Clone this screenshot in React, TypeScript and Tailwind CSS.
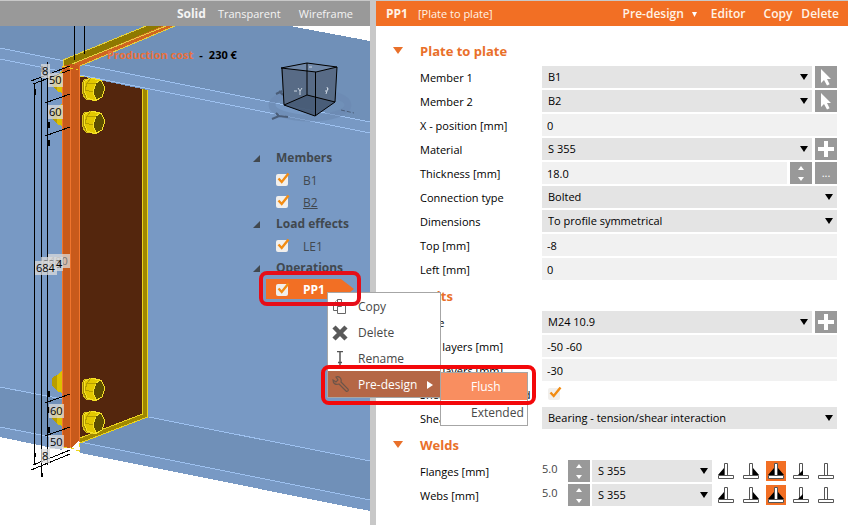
import { useState } from "react";
import type { ReactNode } from "react";
import clsx from "clsx";

const Caret = ({ className }: { className?: string }) => (
    <svg className={className} width="8" height="6" viewBox="0 0 8 6" fill="currentColor">
        <path d="M0 0h8L4 6z" />
    </svg>
);

function Check({ id, label, className }: { id: string; label?: string; className?: string }) {
    const [on, setOn] = useState(true);

    return (
        <span className={clsx("relative block size-3", className)}>
            <input
                id={id}
                type="checkbox"
                aria-label={label}
                checked={on}
                onChange={() => setOn(!on)}
                className="block size-3 appearance-none rounded-xs bg-[#f1efec]"
            />
            {on && (
                <svg className="pointer-events-none absolute -top-1 left-0" width="16" height="16" viewBox="0 0 16 16" fill="none">
                    <path d="M2.500 8.500l3.200 3.500L12.500 3.500" stroke="#f28c13" strokeWidth="2.400" />
                </svg>
            )}
        </span>
    );
}

function Select({ id, value, label, className }: { id?: string; value: string; label?: string; className?: string }) {
    return (
        <div className={clsx("relative h-[22px] min-w-0 bg-[#e4e4e4]", className)}>
            <select id={id} aria-label={label} className="block h-full w-full appearance-none bg-transparent pr-5 pb-px pl-1.5 outline-none">
                <option>{value}</option>
            </select>
            <Caret className="pointer-events-none absolute top-2 right-1 text-black" />
        </div>
    );
}

const Field = ({ id, value }: { id: string; value: string }) => (
    <input id={id} defaultValue={value} className="h-[22px] w-full min-w-0 flex-1 bg-[#f1f1f1] px-[5px] outline-none" />
);

function Square({ label, children }: { label: string; children: ReactNode }) {
    return (
        <button type="button" aria-label={label} className="flex size-[22px] shrink-0 items-center justify-center bg-[#999] text-white">
            {children}
        </button>
    );
}

const PickIcon = () => (
    <svg width="14" height="18" viewBox="0 0 14 18" fill="white">
        <path d="M2 1v14l3-3 3 5.500 2.600-1.300L8 11h4z" />
    </svg>
);

const PlusIcon = () => (
    <svg width="16" height="16" viewBox="0 0 16 16" fill="white">
        <path d="M6 0h4v6h6v4h-6v6H6v-6H0V6h6z" />
    </svg>
);

function Spinner({ label }: { label: string }) {
    return (
        <div className="flex size-[22px] shrink-0 flex-col bg-[#999] text-white">
            <button type="button" aria-label={`Increase ${label}`} className="flex flex-1 items-center justify-center">
                <svg width="6" height="4" viewBox="0 0 6 4" fill="currentColor"><path d="M0 4h6L3 0z" /></svg>
            </button>
            <button type="button" aria-label={`Decrease ${label}`} className="flex flex-1 items-center justify-center">
                <svg width="6" height="4" viewBox="0 0 6 4" fill="currentColor"><path d="M0 0h6L3 4z" /></svg>
            </button>
        </div>
    );
}

function Row({ id, label, children }: { id: string; label: string; children: ReactNode }) {
    return (
        <div className="flex h-[22px] items-center">
            <label htmlFor={id} className="w-[122px] shrink-0 whitespace-nowrap pt-px">{label}</label>
            <div className="flex min-w-0 flex-1 items-center gap-[3px]">{children}</div>
        </div>
    );
}

function Section({ title, children }: { title: string; children: ReactNode }) {
    return (
        <section>
            <h2 className="flex h-[31px] items-center text-[13px] font-bold text-[#e9702a]">
                <button type="button" aria-label={`Collapse ${title}`} className="w-[27px]">
                    <svg width="10" height="7" viewBox="0 0 10 7" fill="currentColor"><path d="M0 0h10L5 7z" /></svg>
                </button>
                {title}
            </h2>
            <div className="flex flex-col gap-0.5 pl-[27px]">{children}</div>
        </section>
    );
}

const weldTypes = [
    { name: "Left fillet", fill: "M2 14h6V7z" },
    { name: "Right fillet", fill: "M12 7v7h6z" },
    { name: "Both fillets", fill: "M2 14h6V7zM12 7v7h6z" },
    { name: "Butt weld", fill: "M7 14h5V9z" },
    { name: "No weld", fill: "" },
];

function WeldRow({ id, label }: { id: string; label: string }) {
    const [type, setType] = useState(2);

    return (
        <Row id={id} label={label}>
            <input id={id} defaultValue="5.0" className="w-[23px] pb-1 font-normal text-[#444] outline-none" />
            <Spinner label={label} />
            <Select label={`${label} material`} value="S 355" className="-ml-px flex-1" />
            <div className="flex gap-[5px] pr-px pl-px">
                {weldTypes.map((weld, i) => (
                    <button
                        key={weld.name}
                        type="button"
                        aria-label={weld.name}
                        onClick={() => setType(i)}
                        className={clsx("size-5", i === type && "bg-[#f26f24]")}
                    >
                        <svg width="20" height="20" viewBox="0 0 20 20">
                            <path d="M8.500 14.500v-12h3v12M2.500 14.500h15v3h-15z" fill="white" stroke="#555" />
                            <path d={weld.fill} fill="black" />
                        </svg>
                    </button>
                ))}
            </div>
        </Row>
    );
}

const Bolt = ({ x, y }: { x: number; y: number }) => (
    <g transform={`translate(${x} ${y})`}>
        <path d="M3 2C-1 6-1 18 4 22l6 1V2z" fill="#a48d00" stroke="#e0c81a" />
        <path d="M3 4l6-3 9 2 4 8-3 9-5 4-9-3-3-8z" fill="#e2c800" stroke="#f6e228" />
        <path d="M14 6l5-3 4 8-3 9-6 3-3-8z" fill="#5d4e00" stroke="#f6e228" />
        <path d="M9 1l-4 5 9 0M5 6L3 13l8 2" fill="none" stroke="#b59e00" />
    </g>
);

const BoltEnd = ({ y }: { y: number }) => (
    <g>
        <path d={`M62 ${y - 11}l-5 4-5 3v8l5 5 5 2z`} fill="#dcc000" />
        <path d={`M57 ${y - 7}l-5 3v8l5 5z`} fill="#b89d00" />
    </g>
);

const Dim = ({ x, y, w, children, faded }: { x: number; y: number; w: number; children: ReactNode; faded?: boolean }) => (
    <g>
        <rect x={x} y={y} width={w} height="14" fill="#dcdcdc" fillOpacity="0.75" />
        <text x={x + 1} y={y + 11} fontSize="11" fill={faded ? "#777" : "black"}>{children}</text>
    </g>
);

function Model() {
    return (
        <svg className="absolute inset-0 h-full w-full" viewBox="0 26 370 499" preserveAspectRatio="xMinYMin slice">
            <g shapeRendering="crispEdges">
                <path d="M0 26h290l80 15v470L80 453v-12H62v9L0 437z" fill="#7899c4" />
                <path d="M0 26h290l80 15v81L80 64 63 60 0 48z" fill="#7090b8" />
                <path d="M0 387l62 12v40L0 427zM149 417l221 44v39L80 442z" fill="#7090b8" />
                <g stroke="#9dc1f0" fill="none">
                    <path d="M0 48l370 74M0 59l370 74M0 387l62 12M0 427l62 12M149 417l221 44M80 442l290 58" />
                </g>

                {/* beam web with the end plate */}
                <path d="M142 89l6 1v327l-68 26v-5l62-24z" fill="#a08800" />
                <path d="M80 76l62 13v325l-62 24z" fill="#54260d" />
                <path d="M142.500 89v325L80 438M147.500 90v327L80 443" stroke="#ecd51e" fill="none" />
                <path d="M63 60l83-34h29L80 66H63z" fill="#8e7900" />
                <path d="M72 64l90-38h13L80 66z" fill="#cf6420" />
                <path d="M63 66v-6l83-34M72 64l94-38M80 66l95-40" stroke="#e4d140" fill="none" />
                <path d="M62 66l9-2 9 2v373l-8 9-10-1z" fill="#c85a1b" />
                <path d="M62.500 66v381M70.500 66v382M79.500 66v376" stroke="#f0752d" />
                <path d="M62 66l16 4M80 76l12 3M63 447l8 1 8 3v-9" stroke="#ecd51e" fill="none" strokeDasharray="4 3" />

                {[77, 110, 377, 410].map((y) => <Bolt key={y} x={82} y={y} />)}
                {[82, 115, 382, 415].map((y) => <BoltEnd key={y} y={y} />)}

                <g stroke="black" fill="none">
                    <path d="M34.500 83v382M41.500 76v400M47.500 62v403M74.500 26v34M84.500 26v28" />
                    <path d="M31 81l39-15M33 84l37-14M45 103l25-9M45 136l25-9M45 403l25-9M45 436l25-9M33 465l37-15M31 470l39-16" />
                    <path d="M34.500 89v6M41.500 66v6M48.500 122v6M48.500 140v6M48.500 391v6M48.500 407v6M48.500 427v6M41.500 473v4M34.500 453v4" strokeWidth="2" />
                </g>
            </g>
            <Dim x={48} y={254} w={22} faded>480</Dim>
            <Dim x={41} y={257} w={22} faded>680</Dim>
            <Dim x={35} y={261} w={22}>684</Dim>
            <text x="56" y="268" fontSize="11">4</text>
            <Dim x={41} y={64} w={9}>8</Dim>
            <Dim x={48} y={73} w={15}>50</Dim>
            <Dim x={48} y={105} w={15}>60</Dim>
            <Dim x={49} y={404} w={15}>60</Dim>
            <Dim x={49} y={435} w={15}>50</Dim>
            <Dim x={41} y={449} w={9}>8</Dim>

            {/* view cube */}
            <ellipse cx="310" cy="105" rx="38" ry="13" fill="none" stroke="#6b89b0" strokeWidth="7" opacity="0.6" />
            <path d="M272 119l7-3 9 1M279 116l-3-3M276 94l6-3M279 91l4 4" stroke="#4a5d78" strokeWidth="2" fill="none" />
            <path d="M341 110l13 3" stroke="#4a5d78" strokeDasharray="4 2" />
            <path d="M281 68l26-5 30 4-2 35-20 14-31-11z" fill="#54657d" fillOpacity="0.85" />
            <path d="M281 68l26-5 30 4-21 5z" fill="#7088a8" />
            <path d="M284 105l23-10 28 7-20 14z" fill="#40546f" fillOpacity="0.6" />
            <path d="M281 68l26-5 30 4-21 5zM282 68l2 37 31 11 20-14 2-35M315.500 72v44M307 63v32l-23 10M307 95l28 7" stroke="black" fill="none" />
            <path d="M294 91h3M298 88l2 3 2-3M300 91v4M325 91h2M327 87l1 3M328 88l-2 6M309 67h3" stroke="#cbd5e1" fill="none" />
        </svg>
    );
}

function TreeGroup({ title, children }: { title: string; children: ReactNode }) {
    return (
        <li>
            <button type="button" className="flex h-[22px] items-center text-[12px] font-bold">
                <svg className="mr-4 ml-[3px]" width="7" height="7" viewBox="0 0 7 7" fill="currentColor"><path d="M7 0v7H0z" /></svg>
                {title}
            </button>
            <ul>{children}</ul>
        </li>
    );
}

function TreeItem({ id, underline }: { id: string; underline?: boolean }) {
    return (
        <li className="flex h-[22px] items-center gap-[15px] pl-[26px]">
            <Check id={id} />
            <label htmlFor={id} className={clsx("pt-px text-[12px] font-medium", underline && "underline")}>{id}</label>
        </li>
    );
}

const menuIcons = {
    Copy: (
        <svg width="16" height="18" viewBox="0 0 16 18" fill="white" stroke="#666">
            <path d="M1.500 5.500l4-4h4v11h-8z" />
            <path d="M1.500 5.500h4v-4" />
            <path d="M5.500 8.500l4-4h4v11h-8z" />
            <path d="M5.500 8.500h4v-4" />
        </svg>
    ),
    Delete: (
        <svg width="16" height="16" viewBox="0 0 16 16" stroke="#595959" strokeWidth="4.500">
            <path d="M2 2l12 12M14 2L2 14" />
        </svg>
    ),
    Rename: (
        <svg width="16" height="16" viewBox="0 0 16 16" stroke="#555" fill="none">
            <path d="M5 .5h6M8 1v14M6 11.500h4M7 15h2" strokeWidth="1.500" />
        </svg>
    ),
    "Pre-design": (
        <svg width="17" height="17" viewBox="0 0 17 17" stroke="#6d5549" fill="none" strokeWidth="1.200">
            <path d="M1 4l3 2 2-2-2-3c3-1 6 1 5 5l7 7c1 2-1 3-2 2L7 8C4 9 1 8 1 4z" />
        </svg>
    ),
};

function ContextMenu() {
    return (
        <div className="absolute top-[13px] left-[61px] z-20 w-[114px] border border-[#a6a6a6] bg-white text-[12px] font-medium text-[#484848]">
            {Object.entries(menuIcons).map(([name, icon]) => (
                <button
                    key={name}
                    type="button"
                    className={clsx("flex h-[26px] w-full items-center pt-px pl-1", name === "Pre-design" && "bg-[#b56746] text-white")}
                >
                    <span className="w-[26px]">{icon}</span>
                    {name}
                    {name === "Pre-design" && (
                        <svg className="ml-2.5" width="6" height="8" viewBox="0 0 6 8" fill="white"><path d="M0 0v8l6-4z" /></svg>
                    )}
                </button>
            ))}
            <div className="absolute top-[79px] left-[112px] w-[88px] border border-[#a6a6a6] bg-white">
                <button type="button" className="block h-[27px] w-full bg-[#f98e60] pl-[30px] text-left text-white">Flush</button>
                <button type="button" className="block h-[25px] w-full pl-[30px] text-left">Extended</button>
            </div>
            <div className="pointer-events-none absolute top-[72px] -left-[7px] h-10 w-[215px] rounded-lg border-4 border-[#f3080a]" />
        </div>
    );
}

function Scene() {
    return (
        <div className="flex min-w-0 flex-col">
            <nav className="flex h-[25px] items-center justify-end bg-[#999] pt-px pr-[17px] text-[#f4f4f4]">
                <button type="button" className="mr-3 text-[12px] font-bold">Solid</button>
                <button type="button" className="mr-[18px]">Transparent</button>
                <button type="button">Wireframe</button>
            </nav>
            <div className="relative flex-1 bg-white">
                <Model />
                <p className="absolute top-[21px] left-[107px] flex gap-1.5 text-[11px] font-bold text-black">
                    <span className="text-[#e8703c]">Production cost</span>
                    <span>-</span>
                    <span>230 €</span>
                </p>
                <ul className="absolute top-[121px] right-[10px] w-[110px] text-[#41484f]">
                    <TreeGroup title="Members">
                        <TreeItem id="B1" />
                        <TreeItem id="B2" underline />
                    </TreeGroup>
                    <TreeGroup title="Load effects">
                        <TreeItem id="LE1" />
                    </TreeGroup>
                    <TreeGroup title="Operations">
                        <li className="relative ml-4 flex h-[22px] items-center gap-[15px] pl-2.5 text-white">
                            <svg className="absolute top-0 left-0" width="88" height="20" viewBox="0 0 88 20"><path d="M0 0h75l13 10-13 10H0z" fill="#f26f24" /></svg>
                            <Check id="PP1" />
                            <label htmlFor="PP1" className="relative text-[12px] font-bold">PP1</label>
                            <ContextMenu />
                            <div className="pointer-events-none absolute -top-2 -left-[7px] z-30 h-[35px] w-[102px] rounded-lg border-4 border-[#e60d18]" />
                        </li>
                    </TreeGroup>
                </ul>
            </div>
        </div>
    );
}

function Properties() {
    return (
        <div className="min-w-0 bg-white">
            <header className="flex h-[25px] items-center bg-[#f26f24] pt-px pr-[9px] pl-2.5 text-[12px] text-[#fff3e6]">
                <h1 className="mr-2.5 font-bold">PP1</h1>
                <span className="flex-1 text-[11px] whitespace-nowrap">[Plate to plate]</span>
                <nav className="flex font-semibold">
                    <button type="button" className="mr-3.5 flex items-center gap-2">
                        Pre-design
                        <svg width="5" height="5" viewBox="0 0 5 5" fill="white"><path d="M0 0h5L2.500 5z" /></svg>
                    </button>
                    <button type="button" className="mr-[18px]">Editor</button>
                    <button type="button" className="mr-[9px]">Copy</button>
                    <button type="button">Delete</button>
                </nav>
            </header>
            <form className="pt-[9px] pr-[11px] pl-[17px]">
                <Section title="Plate to plate">
                    <Row id="member1" label="Member 1">
                        <Select id="member1" value="B1" className="flex-1" />
                        <Square label="Pick member 1"><PickIcon /></Square>
                    </Row>
                    <Row id="member2" label="Member 2">
                        <Select id="member2" value="B2" className="flex-1" />
                        <Square label="Pick member 2"><PickIcon /></Square>
                    </Row>
                    <Row id="x" label="X - position [mm]"><Field id="x" value="0" /></Row>
                    <Row id="material" label="Material">
                        <Select id="material" value="S 355" className="flex-1" />
                        <Square label="Add material"><PlusIcon /></Square>
                    </Row>
                    <Row id="thickness" label="Thickness [mm]">
                        <Field id="thickness" value="18.0" />
                        <Spinner label="thickness" />
                        <Square label="More">...</Square>
                    </Row>
                    <Row id="connection" label="Connection type"><Select id="connection" value="Bolted" className="flex-1" /></Row>
                    <Row id="dimensions" label="Dimensions"><Select id="dimensions" value="To profile symmetrical" className="flex-1" /></Row>
                    <Row id="top" label="Top [mm]"><Field id="top" value="-8" /></Row>
                    <Row id="left" label="Left [mm]"><Field id="left" value="0" /></Row>
                </Section>
                <Section title="Bolts">
                    <Row id="type" label="Type">
                        <Select id="type" value="M24 10.9" className="flex-1" />
                        <Square label="Add bolt type"><PlusIcon /></Square>
                    </Row>
                    <Row id="topLayers" label="Top layers [mm]"><Field id="topLayers" value="-50 -60" /></Row>
                    <Row id="leftLayers" label="Left layers [mm]"><Field id="leftLayers" value="-30" /></Row>
                    <Row id="thread" label="Shear plane in thread"><Check id="thread" className="ml-1.5" /></Row>
                    <Row id="shear" label="Shear transfer"><Select id="shear" value="Bearing - tension/shear interaction" className="flex-1" /></Row>
                </Section>
                <Section title="Welds">
                    <WeldRow id="flanges" label="Flanges [mm]" />
                    <WeldRow id="webs" label="Webs [mm]" />
                </Section>
            </form>
        </div>
    );
}

export default function App() {
    return (
        <div className="grid min-h-screen grid-cols-[370fr_6px_472fr] border-t border-[#c8c8c8] bg-white font-['Open_Sans','Noto_Sans',sans-serif] text-[11px] leading-4 font-medium text-black">
            <Scene />
            <div className="bg-[#c8c8c8]" />
            <Properties />
        </div>
    );
}
